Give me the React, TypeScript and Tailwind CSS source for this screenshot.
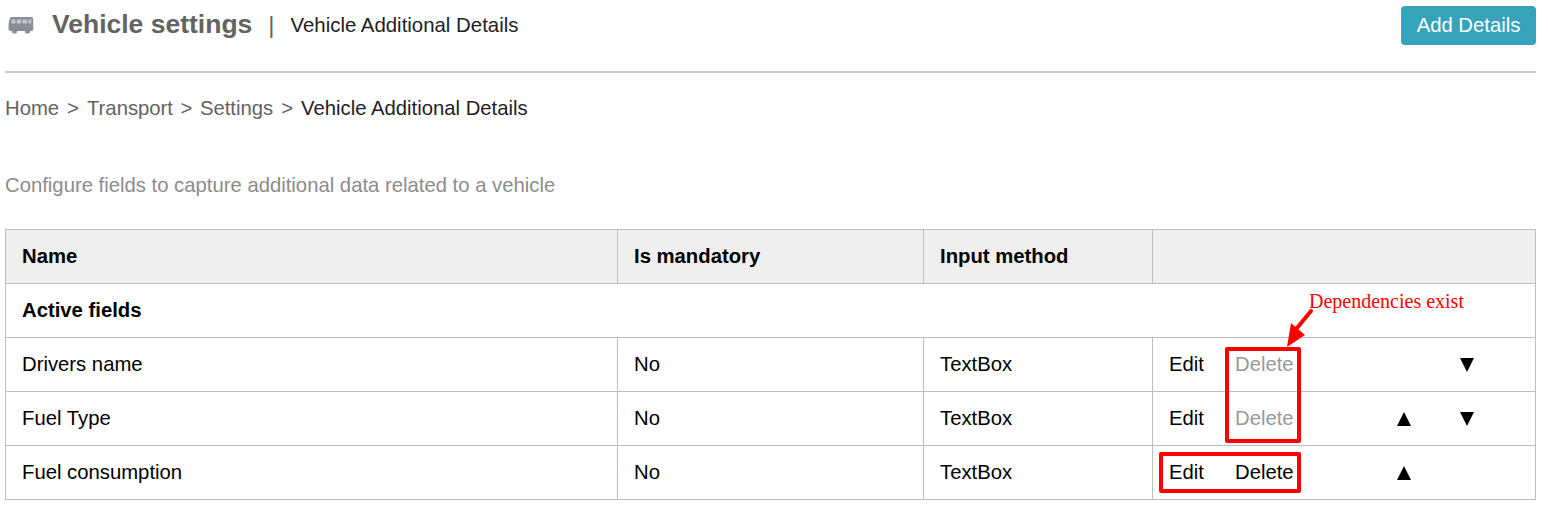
import React from 'react';

const rows = [
    { name: 'Drivers name', dim: true, up: false, down: true },
    { name: 'Fuel Type', dim: true, up: true, down: true },
    { name: 'Fuel consumption', dim: false, up: true, down: false },
];

const BusIcon = () => (
    <svg width="26" height="18" viewBox="0 0 26 18" className="block text-[#8a8d99]">
        <path fill="currentColor" d="M3.5 1h19.5c1.2 0 2.2.8 2.2 2v10.6c0 1-.6 1.4-1.6 1.4H2.2C1.2 15 .6 14.6.6 13.6V7.6l1.2-5C2 1.6 2.6 1 3.5 1z" />
        <path fill="#c3c5ce" d="M3.8 3.4 3 7.4h4.4v-4zM8.8 3.4v4h4.4v-4zM14.6 3.4v4H19v-4zM20.4 3.4v4h3v-4z" />
        <circle cx="6.5" cy="15" r="2.6" fill="currentColor" />
        <circle cx="19.5" cy="15" r="2.6" fill="currentColor" />
    </svg>
);

const App = () => (
    <div className="relative w-[1548px] h-[507px] overflow-hidden bg-white pl-[5px] pr-[12px] font-['Liberation_Sans',Arial,sans-serif] text-[20.3px] text-black">
        <div className="flex items-center justify-between pt-[6px] pb-[26px] border-b-2 border-[#cccccc]">
            <div className="flex items-center -mt-[2px]">
                <span className="ml-[3px] w-[44px]"><BusIcon /></span>
                <span className="text-[26.5px] font-bold text-[#636363]">Vehicle settings</span>
                <span className="ml-[16px] text-[24px] leading-[24px] text-[#636363]">|</span>
                <span className="ml-[16px] mt-[1px] text-[20.4px] text-[#222222]">Vehicle Additional Details</span>
            </div>
            <button className="w-[135px] h-[39px] rounded-[4px] bg-[#37a3bb] text-white">Add Details</button>
        </div>

        <div className="flex items-center h-[23px] mt-[24px] text-[#636363]">
            <span>Home</span>
            <span className="mx-[8px]">&gt;</span>
            <span>Transport</span>
            <span className="mx-[7.5px]">&gt;</span>
            <span>Settings</span>
            <span className="mx-[8px]">&gt;</span>
            <span className="text-[#222222]">Vehicle Additional Details</span>
        </div>

        <p className="mt-[54px] h-[23px] leading-[23px] text-[#8c8c8c]">Configure fields to capture additional data related to a vehicle</p>

        <div className="relative mt-[32px] border border-[#bfbfbf] border-b-0">
            <div className="grid grid-cols-[612px_306px_229px_1fr] h-[54px] items-stretch bg-[#efefef] font-bold border-b border-[#bfbfbf]">
                <div className="flex items-center pl-[16px] border-r border-[#bfbfbf]">Name</div>
                <div className="flex items-center pl-[16px] border-r border-[#bfbfbf]">Is mandatory</div>
                <div className="flex items-center pl-[16px] border-r border-[#bfbfbf]">Input method</div>
                <div />
            </div>
            <div className="flex items-center h-[54px] pl-[16px] font-bold border-b border-[#bfbfbf]">Active fields</div>
            {rows.map(row => (
                <div key={row.name} className="grid grid-cols-[612px_306px_229px_1fr] h-[54px] border-b border-[#bfbfbf]">
                    <div className="flex items-center pl-[16px] border-r border-[#bfbfbf]">{row.name}</div>
                    <div className="flex items-center pl-[16px] border-r border-[#bfbfbf]">No</div>
                    <div className="flex items-center pl-[16px] border-r border-[#bfbfbf]">TextBox</div>
                    <div className="flex items-center pl-[16px]">
                        <span className="w-[66px]">Edit</span>
                        <span className={`w-[137px] ${row.dim ? 'text-[#999999]' : ''}`}>Delete</span>
                        <span className="w-[64px] flex justify-center">{row.up && <svg width="14" height="14" viewBox="0 0 14 14"><path d="M7 0 14 14H0z" /></svg>}</span>
                        <span className="w-[62px] flex justify-center">{row.down && <svg width="14" height="14" viewBox="0 0 14 14"><path d="M0 0H14L7 14z" /></svg>}</span>
                    </div>
                </div>
            ))}

            <div className="absolute left-[1219px] top-[117px] w-[76px] h-[96px] border-[4px] border-[#ff0000] rounded-[2px]" />
            <div className="absolute left-[1153px] top-[222px] w-[142px] h-[41px] border-[4px] border-[#ff0000] rounded-[2px]" />
            <svg className="absolute left-[1279px] top-[78px]" width="30" height="42" viewBox="0 0 30 42">
                <path d="M26 3 12 20" stroke="#ff0000" strokeWidth="4" strokeLinecap="round" fill="none" />
                <path d="M2 39 6 15 20 27z" fill="#ff0000" />
            </svg>
            <span className="absolute left-[1303px] top-[60px] font-['Liberation_Serif',serif] text-[20px] leading-[22px] text-[#ff0000] whitespace-nowrap">Dependencies exist</span>
        </div>
    </div>
);

export default App;
